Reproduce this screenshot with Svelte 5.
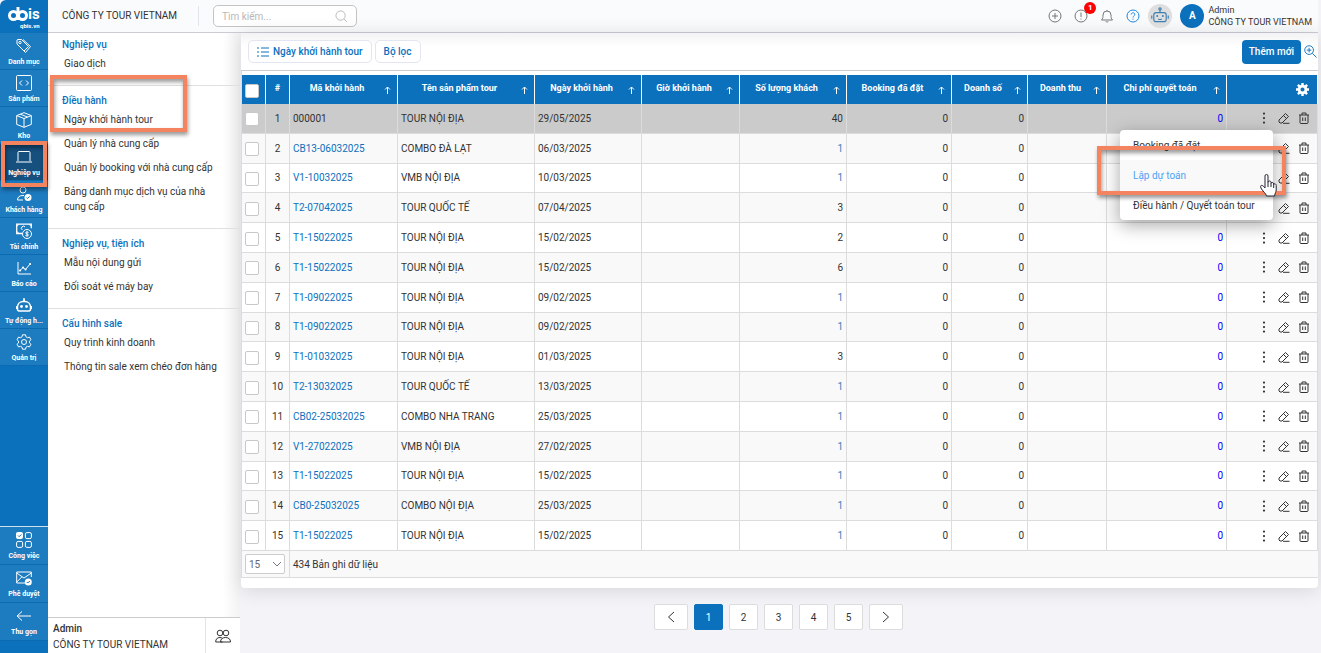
<script>
  let search = $state("");
  let pageSize = $state("15");
  let page = $state(1);

  const mainNav = [
    { icon: "tag", label: "Danh mục" },
    { icon: "code", label: "Sản phẩm" },
    { icon: "box", label: "Kho" },
    { icon: "laptop", label: "Nghiệp vụ", active: true },
    { icon: "person", label: "Khách hàng" },
    { icon: "money", label: "Tài chính" },
    { icon: "chart", label: "Báo cáo" },
    { icon: "robot", label: "Tự động h..." },
    { icon: "gear", label: "Quản trị" },
  ];
  const footNav = [
    { icon: "grid", label: "Công việc" },
    { icon: "mail", label: "Phê duyệt" },
    { icon: "back", label: "Thu gọn" },
  ];

  const sections = [
    { title: "Nghiệp vụ", items: ["Giao dịch"] },
    {
      title: "Điều hành",
      marked: true,
      items: [
        "Ngày khởi hành tour",
        "Quản lý nhà cung cấp",
        "Quản lý booking với nhà cung cấp",
        "Bảng danh mục dịch vụ của nhà cung cấp",
      ],
    },
    { title: "Nghiệp vụ, tiện ích", items: ["Mẫu nội dung gửi", "Đối soát vé máy bay"] },
    { title: "Cấu hình sale", items: ["Quy trình kinh doanh", "Thông tin sale xem chéo đơn hàng"] },
  ];

  const columns = [
    { label: "Mã khởi hành", width: 108 },
    { label: "Tên sản phẩm tour", width: 137 },
    { label: "Ngày khởi hành", width: 107 },
    { label: "Giờ khởi hành", width: 98 },
    { label: "Số lượng khách", width: 107 },
    { label: "Booking đã đặt", width: 105 },
    { label: "Doanh số", width: 76 },
    { label: "Doanh thu", width: 79 },
    { label: "Chi phí quyết toán", width: 120 },
  ];

  // code, product, date, guests
  const rows = [
    ["000001", "TOUR NỘI ĐỊA", "29/05/2025", 40],
    ["CB13-06032025", "COMBO ĐÀ LẠT", "06/03/2025", 1],
    ["V1-10032025", "VMB NỘI ĐỊA", "10/03/2025", 1],
    ["T2-07042025", "TOUR QUỐC TẾ", "07/04/2025", 3],
    ["T1-15022025", "TOUR NỘI ĐỊA", "15/02/2025", 2],
    ["T1-15022025", "TOUR NỘI ĐỊA", "15/02/2025", 6],
    ["T1-09022025", "TOUR NỘI ĐỊA", "09/02/2025", 1],
    ["T1-09022025", "TOUR NỘI ĐỊA", "09/02/2025", 1],
    ["T1-01032025", "TOUR NỘI ĐỊA", "01/03/2025", 3],
    ["T2-13032025", "TOUR QUỐC TẾ", "13/03/2025", 1],
    ["CB02-25032025", "COMBO NHA TRANG", "25/03/2025", 1],
    ["V1-27022025", "VMB NỘI ĐỊA", "27/02/2025", 1],
    ["T1-15022025", "TOUR NỘI ĐỊA", "15/02/2025", 1],
    ["CB0-25032025", "COMBO NỘI ĐỊA", "25/03/2025", 1],
    ["T1-15022025", "TOUR NỘI ĐỊA", "15/02/2025", 1],
  ];
</script>

{#snippet icon(name)}
  <svg class="icon" viewBox="0 0 16 16" aria-hidden="true">
    {#if name === "tag"}
      <path d="M1 2v4l7 7 4.500-4.500-7-7H2a1 1 0 0 0-1 .5z" />
      <path d="M7 1.500l7.500 7-5 6L8 13" />
      <circle cx="4" cy="4.500" r="1.200" />
    {:else if name === "code"}
      <rect x=".5" y=".5" width="15" height="15" rx="1" />
      <path d="M6 5.500L3.500 8 6 10.500M10 5.500L12.500 8 10 10.500" />
    {:else if name === "box"}
      <path d="M8 .7l7.300 2.900v8.800L8 15.300.7 12.400V3.600zM.7 3.600L8 6.500l7.300-2.900M8 6.500v8.800M4.300 2.200l7.400 2.900" />
    {:else if name === "laptop"}
      <path d="M2 12V3.500a1 1 0 0 1 1-1h10a1 1 0 0 1 1 1V12M0 13h16" />
    {:else if name === "person"}
      <circle cx="7" cy="4" r="3" />
      <path d="M7 14H1.500c0-3 2-4.500 5.500-4.500h1" />
      <circle class="solid" cx="12" cy="11.500" r="3.500" />
      <path class="ink" d="M10.500 11.500l1 1 2-2" />
    {:else if name === "money"}
      <path d="M6 10.500H.7V1.200h14.600v4" stroke-width="1.300" />
      <path d="M.7 3.500L3 1.200M13 1.200l2.300 2.300M.7 8.200L3 10.500" />
      <path d="M9 4a2 2 0 1 0-2.500 3" />
      <circle cx="11" cy="11" r="4.500" />
      <path d="M12.500 9.500c-1-1-3-.7-2.800.5.200 1.200 2.600.7 2.700 2 .1 1.200-2 1.400-3 .4M11 8.500v5" />
    {:else if name === "chart"}
      <path d="M2 2v12h13M4 10.500l3-3 2.500 2L14 4" />
      <path d="M4 10.500h.1M7 7.500h.1M9.500 9.500h.1M14 4h.1" stroke-width="2" stroke-linecap="round" />
    {:else if name === "robot"}
      <path d="M8 4V1.500M8 1.200v.2" stroke-width="1.800" />
      <path d="M1.500 9.500a5.500 5.500 0 0 1 5.500-5h2a5.500 5.500 0 0 1 5.500 5v3a1.500 1.500 0 0 1-1.500 1.500H3a1.500 1.500 0 0 1-1.500-1.500zM.7 9v3M15.300 9v3" stroke-width="1.500" />
      <circle class="solid" cx="5.500" cy="9.500" r="1.400" />
      <circle class="solid" cx="10.500" cy="9.500" r="1.400" />
    {:else if name === "gear"}
      <path d="M6.500.8h3l.5 2 1.500.9 2-.6 1.500 2.600-1.500 1.400v1.800l1.500 1.400-1.500 2.600-2-.6-1.500.9-.5 2h-3l-.5-2-1.500-.9-2 .6L1 10.300l1.500-1.400V7.100L1 5.700l1.500-2.600 2 .6L6 2.800z" />
      <circle cx="8" cy="8" r="2.500" />
    {:else if name === "grid"}
      <rect class="solid" x="0" y="0" width="7" height="7" rx="2" />
      <path class="ink" d="M2 3.500l1.200 1.200L5.300 2.500" />
      <rect x="9.400" y=".6" width="6" height="6" rx="1.500" />
      <rect x=".6" y="9.400" width="6" height="6" rx="1.500" />
      <rect x="9.400" y="9.400" width="6" height="6" rx="1.500" />
    {:else if name === "mail"}
      <path d="M9 13H.7V2h14.600v5M.7 3l7.300 5 7.300-5M.7 12L6 6.800" />
      <circle class="solid" cx="12.300" cy="12" r="3.500" />
      <path class="ink" d="M10.800 12l1 1 2-2" />
    {:else if name === "back"}
      <path d="M15 8H1M6 3.500L1 8l5 4.500" />
    {/if}
  </svg>
{/snippet}

{#snippet navItem(item)}
  <li class:active={item.active}>
    <a href="#nav">
      {@render icon(item.icon)}
      <span>{item.label}</span>
    </a>
    {#if item.active}<i class="callout callout-nav"></i>{/if}
  </li>
{/snippet}

<div class="app">
  <nav class="rail">
    <a class="logo" href="#home" aria-label="qbis">
      <svg viewBox="0 0 48 32">
        <g fill="none" stroke="#fff" stroke-width="3">
          <circle cx="13.500" cy="15.500" r="4" />
          <circle cx="22.500" cy="15.500" r="4" />
          <path d="M18 7v13" />
        </g>
        <text x="28" y="19" font-size="15" font-weight="700">is</text>
        <text x="20" y="28" font-size="6" font-weight="700">qbis.vn</text>
      </svg>
    </a>
    <ul>
      {#each mainNav as item}{@render navItem(item)}{/each}
    </ul>
    <ul class="rail-foot">
      {#each footNav as item}{@render navItem(item)}{/each}
    </ul>
  </nav>

  <div class="shell">
    <header>
      <h1>CÔNG TY TOUR VIETNAM</h1>
      <label class="search">
        <input type="text" placeholder="Tìm kiếm..." aria-label="Tìm kiếm" bind:value={search} />
        <svg viewBox="0 0 14 14"><circle cx="6" cy="6" r="5" /><path d="M9.800 9.800l3 3" /></svg>
      </label>
      <div class="tools">
        <button aria-label="Thêm">
          <svg viewBox="0 0 14 14"><circle cx="7" cy="7" r="6" /><path d="M7 4v6M4 7h6" /></svg>
        </button>
        <button aria-label="Cảnh báo">
          <svg viewBox="0 0 14 14"><circle cx="7" cy="7" r="6" /><path d="M7 3.500V8M7 9.500v1" /></svg>
          <b class="badge">1</b>
        </button>
        <button aria-label="Thông báo">
          <svg viewBox="0 0 14 14"><path d="M1.500 11h11c-1.500-1.500-1.500-3-1.500-5a4 4 0 0 0-8 0c0 2 0 3.500-1.500 5zM7 2V1M5.700 12.300c.5 1 2.100 1 2.600 0" /></svg>
        </button>
        <button class="help" aria-label="Trợ giúp">
          <svg viewBox="0 0 14 14"><circle cx="7" cy="7" r="6" /><path d="M5.200 5.500c0-2.300 3.600-2.300 3.600 0C8.800 7 7 6.800 7 8.500M7 9.700v1" /></svg>
        </button>
        <button class="bot" aria-label="Trợ lý">
          <svg viewBox="0 0 16 16"><rect x="2.500" y="5" width="11" height="8" rx="2" /><path d="M8 5V2.500M.7 7.500v3M15.300 7.500v3M6.500 10.500c.8.800 2.200.800 3 0" /><path d="M5.500 8h.1M10.500 8h.1" stroke-width="1.600" stroke-linecap="round" /><circle cx="8" cy="1.800" r="1" /></svg>
        </button>
        <span class="avatar">A</span>
        <p class="who"><span>Admin</span><span>CÔNG TY TOUR VIETNAM</span></p>
      </div>
    </header>

    <div class="columns">
      <aside>
        {#each sections as section}
          <section>
            <h2>{section.title}</h2>
            <ul>
              {#each section.items as item}
                <li><a href="#menu">{item}</a></li>
              {/each}
            </ul>
            {#if section.marked}<i class="callout callout-menu"></i>{/if}
          </section>
        {/each}
        <div class="account">
          <p><b>Admin</b><span>CÔNG TY TOUR VIETNAM</span></p>
          <button aria-label="Tài khoản">
            <svg viewBox="0 0 16 14"><circle cx="5" cy="4" r="2.800" /><circle cx="11" cy="4" r="2.800" /><path d="M7.500 13H.7c0-3 1.500-4.500 4.300-4.500 1 0 2 .3 2.500 1M5.500 13c0-3 2-4.500 5-4.500s5 1.500 5 4.500z" /></svg>
          </button>
        </div>
      </aside>

      <main>
        <div class="panel">
          <div class="bar">
            <button class="tab">
              <svg viewBox="0 0 12 10"><path d="M0 1h2M4 1h8M0 5h2M4 5h8M0 9h2M4 9h8" /></svg>
              Ngày khởi hành tour
            </button>
            <button class="tab">Bộ lọc</button>
            <button class="add">Thêm mới</button>
            <button class="zoom" aria-label="Tìm nâng cao">
              <svg viewBox="0 0 14 14"><circle cx="5.500" cy="5.500" r="4.700" /><path d="M9 9l4.500 4.500M3 5.500h5M5.500 3v5" /></svg>
            </button>
          </div>

          <div class="table-wrap">
            <table>
              <colgroup>
                <col style="width: 24px" />
                <col style="width: 24px" />
                {#each columns as col}
                  <col style="width: {col.width}px" />
                {/each}
                <col style="width: 91px" />
              </colgroup>
              <thead>
                <tr>
                  <th class="check"><input type="checkbox" aria-label="Chọn tất cả" /></th>
                  <th>#</th>
                  {#each columns as col}
                    <th>
                      <div class="head">
                        <span>{col.label}</span>
                        <svg viewBox="0 0 7 8"><path d="M3.500 8V1M1 3.500L3.500 1 6 3.500" /></svg>
                      </div>
                    </th>
                  {/each}
                  <th class="cog">
                    <button aria-label="Cài đặt cột">
                      <svg viewBox="0 0 14 14"><circle cx="7" cy="7" r="3.700" stroke-width="3" /><path d="M7 0v14M0 7h14M2 2l10 10M12 2L2 12" stroke-width="2.600" stroke-dasharray="2.400 9.200 2.400" /></svg>
                    </button>
                  </th>
                </tr>
              </thead>
              <tbody>
                {#each rows as [code, product, date, guests], i}
                  <tr class:selected={i === 0}>
                    <td class="check"><input type="checkbox" aria-label="Chọn {code}" /></td>
                    <td class="center">{i + 1}</td>
                    <td>{#if i === 0}{code}{:else}<a href="#row">{code}</a>{/if}</td>
                    <td>{product}</td>
                    <td>{date}</td>
                    <td></td>
                    <td class="num" class:one={guests === 1}>{guests}</td>
                    <td class="num">0</td>
                    <td class="num">0</td>
                    <td></td>
                    <td class="num cost">0</td>
                    <td class="actions">
                      <div>
                        <button aria-label="Thao tác">
                          <svg viewBox="0 0 12 12"><path d="M6 1.500v.1M6 6v.1M6 10.500v.1" stroke-width="2.200" stroke-linecap="round" /></svg>
                        </button>
                        <button aria-label="Sửa">
                          <svg viewBox="0 0 12 12"><path d="M1 8l6.500-6.500 3 3L4 11H2L1 10zM5.500 3.500l3 3M5 11.300h6.500" /></svg>
                        </button>
                        <button aria-label="Xóa">
                          <svg viewBox="0 0 12 12"><path d="M1 3h10M4 3V1h4v2M2 3v7.500a1 1 0 0 0 1 1h6a1 1 0 0 0 1-1V3M4.700 5.500v3.500M7.300 5.500v3.500" /></svg>
                        </button>
                      </div>
                      {#if i === 0}
                        <div class="menu">
                          <button>Booking đã đặt</button>
                          <button class="hover">Lập dự toán</button>
                          <button>Điều hành / Quyết toán tour</button>
                          <i class="callout callout-action"></i>
                          <svg class="hand" viewBox="0 0 18 24"><path d="M6 14V3a1.500 1.500 0 0 1 3 0v6.500c0-2 3-2 3 0v1c0-1.500 2.700-1.500 2.700.5v.7c0-1.500 2.500-1.200 2.500.8V17c0 2-1.200 3-1.700 6H7.500c-.5-2.500-3-4-5-7-1.500-2.500-1-4 .8-3.500 1 .2 1.700 1.500 2.700 2.500zM9 9.500V14M12 10.500V14M14.700 11.500V15" /></svg>
                        </div>
                      {/if}
                    </td>
                  </tr>
                {/each}
              </tbody>
              <tfoot>
                <tr>
                  <td colspan="2" class="size">
                    <select aria-label="Số dòng" bind:value={pageSize}>
                      <option>15</option>
                      <option>30</option>
                      <option>50</option>
                    </select>
                    <svg viewBox="0 0 10 6"><path d="M1 1l4 4 4-4" /></svg>
                  </td>
                  <td colspan="10">434 Bản ghi dữ liệu</td>
                </tr>
              </tfoot>
            </table>
          </div>
        </div>

        <div class="pager">
          <button class="arrow" aria-label="Trang trước"><svg viewBox="0 0 8 12"><path d="M7 1L1.500 6 7 11" /></svg></button>
          {#each [1, 2, 3, 4, 5] as n}
            <button class:current={n === page} onclick={() => (page = n)}>{n}</button>
          {/each}
          <button class="arrow" aria-label="Trang sau"><svg viewBox="0 0 8 12"><path d="M1 1l5.500 5L1 11" /></svg></button>
        </div>
      </main>
    </div>
  </div>
</div>

<style>
  :global(body) {
    background: #f3f3f8;
  }
  .app {
    --blue: #0c71bd;
    --line: #dcdcdc;
    display: flex;
    height: 100vh;
    font: 10px/15px Roboto, sans-serif;
    color: #333;
  }
  .app * {
    box-sizing: border-box;
  }
  ul {
    list-style: none;
    margin: 0;
    padding: 0;
  }
  h1, h2, p {
    margin: 0;
  }
  a {
    color: inherit;
    text-decoration: none;
  }
  button {
    display: inline-flex;
    align-items: center;
    justify-content: center;
    padding: 0;
    border: 0;
    background: none;
    font: inherit;
    color: inherit;
    cursor: pointer;
  }
  svg {
    fill: none;
    stroke: currentColor;
    flex: none;
  }

  .callout {
    position: absolute;
    border: 4px solid #f4845f;
    box-shadow: 1px 3px 4px rgba(0, 0, 0, 0.4), inset 1px 3px 4px rgba(0, 0, 0, 0.4);
    pointer-events: none;
    z-index: 3;
  }

  /* left rail */
  .rail {
    display: flex;
    flex-direction: column;
    flex: none;
    width: 48px;
    padding-bottom: 12px;
    background: var(--blue);
    color: #fff;
    border-top-left-radius: 6px;
  }
  .logo {
    height: 33px;
  }
  .logo svg {
    display: block;
    width: 48px;
    height: 32px;
  }
  .logo text {
    fill: #fff;
    stroke: none;
  }
  .rail li {
    position: relative;
    height: 37px;
    border-bottom: 1px solid #0c6ab0;
    background: #1d7bc0;
  }
  .rail li.active {
    background: #15507f;
  }
  .rail li a {
    display: flex;
    flex-direction: column;
    align-items: center;
    gap: 2px;
    padding-top: 5px;
    font-size: 7px;
    font-weight: 700;
    line-height: 12px;
    white-space: nowrap;
  }
  .icon {
    width: 16px;
    height: 16px;
  }
  .icon .solid {
    fill: #fff;
    stroke: none;
  }
  .icon .ink {
    stroke: var(--blue);
  }
  .rail-foot {
    margin-top: auto;
    border-top: 1px solid #cfe0ee;
  }
  .rail .rail-foot li {
    height: 38px;
  }
  .callout-nav {
    inset: -3px 1px -7px 1px;
  }

  /* top bar */
  .shell {
    display: flex;
    flex-direction: column;
    flex: 1;
    min-width: 0;
  }
  header {
    display: flex;
    align-items: center;
    height: 33px;
    flex: none;
    margin-right: 3px;
    padding: 0 6px 0 14px;
    background: #fafbfd;
    border-bottom: 1px solid #ccccd6;
  }
  h1 {
    padding-right: 21px;
    border-right: 1px solid #e4e4ea;
    font-size: 10px;
    font-weight: 400;
    line-height: 20px;
  }
  .search {
    display: flex;
    align-items: center;
    width: 144px;
    height: 22px;
    margin-left: 14px;
    padding: 0 8px;
    border: 1px solid #c4c4c4;
    border-radius: 5px;
    background: #fff;
  }
  .search input {
    flex: 1;
    min-width: 0;
    padding: 0;
    border: 0;
    outline: 0;
    font: 10px Roboto, sans-serif;
  }
  .search input::placeholder {
    color: #b8b8b8;
  }
  .search svg {
    width: 13px;
    height: 13px;
    stroke: #b5b5b5;
  }
  .tools {
    display: flex;
    align-items: center;
    gap: 12px;
    margin-left: auto;
    color: #777;
  }
  .tools button {
    position: relative;
    width: 14px;
    height: 14px;
  }
  .tools button svg {
    width: 14px;
    height: 14px;
  }
  .badge {
    position: absolute;
    top: -7px;
    left: 10px;
    width: 12px;
    height: 12px;
    border-radius: 50%;
    background: #f00;
    color: #fff;
    font-size: 8px;
    line-height: 12px;
    text-align: center;
  }
  .tools .help {
    color: #1c86e0;
  }
  .tools .bot {
    width: 24px;
    height: 24px;
    margin-left: -4px;
    border-radius: 50%;
    background: #dedede;
    color: #3d7eb0;
  }
  .tools .bot svg {
    width: 18px;
    height: 18px;
  }
  .avatar {
    width: 24px;
    margin-left: -4px;
    border-radius: 50%;
    background: var(--blue);
    color: #fff;
    font-weight: 700;
    line-height: 24px;
    text-align: center;
  }
  .who {
    margin-left: -8px;
    color: #333;
    font-size: 9px;
    line-height: 12px;
  }
  .who span {
    display: block;
  }

  .columns {
    display: flex;
    flex: 1;
    min-height: 0;
  }

  /* sub menu */
  aside {
    display: flex;
    flex-direction: column;
    flex: none;
    width: 192px;
    background: linear-gradient(to right, #fff 175px, #f3f3f5);
  }
  section {
    position: relative;
    padding: 4px 16px 7px 14px;
  }
  section + section {
    padding-top: 7px;
    border-top: 1px solid #e0e0e0;
  }
  h2 {
    margin-bottom: 1px;
    color: var(--blue);
    font-size: 10px;
    font-weight: 500;
    line-height: 16px;
  }
  section li {
    padding: 2px 0 7px 2px;
  }
  .callout-menu {
    inset: -11px 53px auto 2px;
    height: 57px;
  }
  .account {
    display: flex;
    height: 36px;
    margin-top: auto;
    border-top: 1px solid #ccc;
    background: #fff;
  }
  .account p {
    flex: 1;
    padding: 3px 5px;
    line-height: 16px;
    white-space: nowrap;
  }
  .account b {
    display: block;
    font-weight: 500;
  }
  .account button {
    width: 35px;
    border-left: 1px solid #e4e4e4;
  }
  .account button svg {
    width: 16px;
    height: 14px;
  }

  /* content */
  main {
    display: flex;
    flex-direction: column;
    flex: 1;
    min-width: 0;
    padding-left: 1px;
  }
  .panel {
    display: flex;
    flex-direction: column;
    flex: 1;
    min-height: 0;
    margin-right: 3px;
    padding-bottom: 10px;
    border-radius: 0 0 4px 4px;
    background: #fff;
    box-shadow: 0 2px 20px rgba(0, 0, 0, 0.13);
  }
  .bar {
    display: flex;
    align-items: center;
    gap: 3px;
    height: 38px;
    flex: none;
    padding: 0 1px 0 7px;
    border-bottom: 1px solid #ccc;
    background: linear-gradient(#f3f3f5, #fff 14px);
  }
  .tab {
    gap: 4px;
    height: 23px;
    padding: 0 8px;
    border: 1px solid #e3e6f0;
    border-radius: 5px;
    background: #fff;
    color: var(--blue);
    font-weight: 500;
  }
  .tab svg {
    width: 12px;
    height: 10px;
  }
  .add {
    height: 24px;
    margin-left: auto;
    padding: 0 7px;
    border-radius: 4px;
    background: var(--blue);
    color: #fff;
    font-weight: 500;
  }
  .zoom svg {
    width: 13px;
    height: 13px;
    color: var(--blue);
  }
  .table-wrap {
    flex: 1;
    min-height: 0;
    padding-top: 4px;
    border-left: 1px solid var(--line);
  }
  table {
    width: 100%;
    height: 100%;
    table-layout: fixed;
    border-collapse: separate;
    border-spacing: 0;
  }
  th, td {
    padding: 0 3px;
    border-right: 1px solid var(--line);
    border-bottom: 1px solid var(--line);
    text-align: left;
    white-space: nowrap;
  }
  thead tr {
    height: 29px;
  }
  th {
    padding: 0 6px 2px;
    border-right-color: #fff;
    border-bottom: 0;
    background: var(--blue);
    color: #fff;
    font-size: 9px;
    font-weight: 700;
    text-align: center;
  }
  .head {
    display: flex;
    align-items: center;
  }
  .head span {
    flex: 1;
    padding-right: 6px;
  }
  .head svg {
    width: 7px;
    height: 8px;
    margin-top: 2px;
  }
  .cog {
    padding: 0 8px 0 0;
    text-align: right;
  }
  .cog button {
    vertical-align: middle;
  }
  .cog svg {
    width: 13px;
    height: 13px;
  }
  tbody tr {
    height: 24px;
  }
  tbody tr:nth-child(even), tfoot tr {
    background: #f9f9f9;
  }
  tbody tr:nth-child(odd) {
    background: #fff;
  }
  tbody tr.selected {
    background: #cbcbcb;
  }
  td a {
    color: var(--blue);
  }
  .check {
    padding: 0;
    text-align: center;
  }
  .check input {
    appearance: none;
    display: block;
    width: 14px;
    height: 14px;
    margin: 2px 3px 0;
    border: 1px solid #c8c8c8;
    border-radius: 2px;
    background: #fff;
  }
  .center {
    text-align: center;
  }
  .num {
    text-align: right;
  }
  .one {
    color: #3580b8;
  }
  .cost {
    color: #00f;
  }
  .actions {
    position: relative;
    padding: 0 7px;
  }
  .actions > div:first-child {
    display: flex;
    justify-content: flex-end;
    gap: 8px;
  }
  .actions svg {
    width: 12px;
    height: 12px;
  }

  /* row action menu */
  .menu {
    position: absolute;
    top: 26px;
    right: 44px;
    z-index: 2;
    display: flex;
    flex-direction: column;
    width: 153px;
    border-radius: 4px;
    background: #fff;
    box-shadow: 0 5px 18px rgba(0, 0, 0, 0.35);
  }
  .menu button {
    justify-content: flex-start;
    height: 30px;
    padding: 0 13px;
  }
  .menu .hover {
    background: #f9f9f9;
    color: #4da3f5;
  }
  .callout-action {
    inset: 16px -13px 25px -23px;
  }
  .menu .hand {
    position: absolute;
    right: -4px;
    bottom: 23px;
    z-index: 4;
    width: 18px;
    height: 24px;
    fill: #fff;
    stroke: #223;
  }

  tfoot tr {
    height: 27px;
  }
  .size {
    position: relative;
  }
  .size select {
    appearance: none;
    display: block;
    width: 40px;
    height: 20px;
    padding: 0 3px;
    border: 1px solid #ccc;
    border-radius: 2px;
    background: #fff;
    color: #667;
    font: 10px Roboto, sans-serif;
  }
  .size svg {
    position: absolute;
    right: 7px;
    top: 10px;
    width: 10px;
    height: 6px;
    stroke: #778;
    pointer-events: none;
  }
  tfoot td:last-child {
    border-right: 0;
  }

  .pager {
    display: flex;
    justify-content: center;
    gap: 6px;
    flex: none;
    padding: 16px 5px 23px 0;
  }
  .pager button {
    width: 29px;
    height: 26px;
    border: 1px solid #dcdcdc;
    border-radius: 2px;
    background: #fff;
  }
  .pager .arrow {
    width: 34px;
  }
  .pager .current {
    border-color: var(--blue);
    background: var(--blue);
    color: #fff;
  }
  .pager svg {
    width: 8px;
    height: 12px;
  }
</style>
